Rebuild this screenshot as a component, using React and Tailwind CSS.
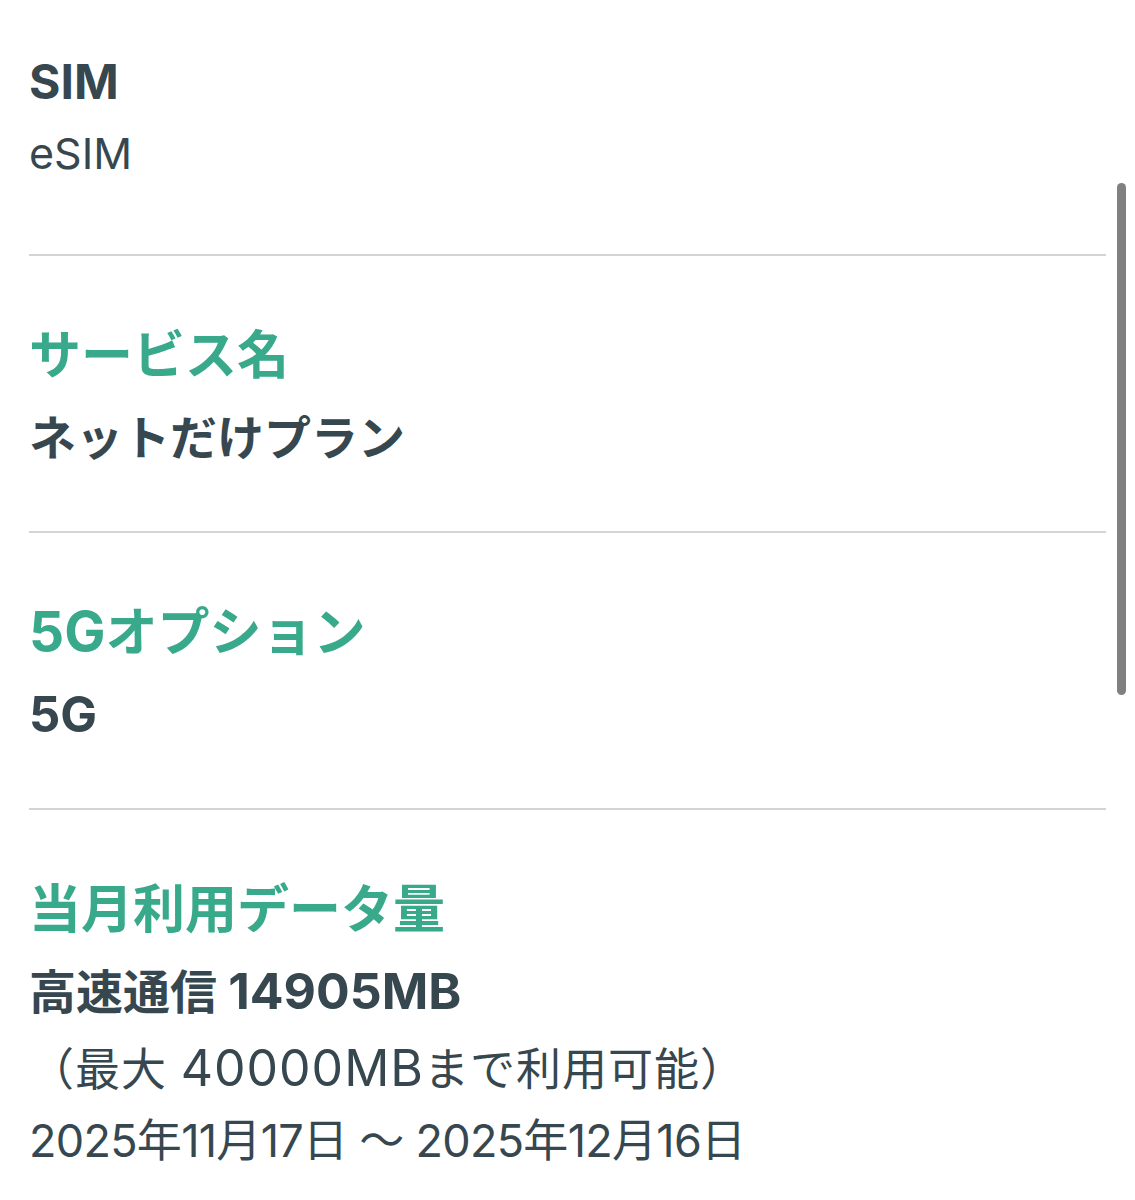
const font = { fontFamily: 'Inter, "Noto Sans CJK JP", sans-serif' };

const Section = ({ title, children, last }) => (
  <div className={`pt-[60px] pb-[51px] ${last ? '' : 'border-b-2 border-[#d4d4d4]'}`}>
    <div className="text-[52px] leading-[80px] font-bold text-[#38a98b]">{title}</div>
    {children}
  </div>
);

export default function App() {
  return (
    <div className="relative w-[1135px] h-[1200px] overflow-hidden bg-white text-[#37474f]" style={font}>
      <div className="pl-[29px] pr-[29px]">
        <div className="pt-[52px] pb-[60px] border-b-2 border-[#d4d4d4]">
          <div className="text-[48px] leading-[60px] font-bold">SIM</div>
          <div className="text-[43px] leading-[82px]">eSIM</div>
        </div>

        <Section title="サービス名">
          <div className="text-[47px] leading-[84px] font-bold">ネットだけプラン</div>
        </Section>

        <Section title={<><span className="text-[55px] leading-[40px]">5G</span>オプション</>}>
          <div className="text-[49px] leading-[84px] font-bold">5G</div>
        </Section>

        <Section title="当月利用データ量" last>
          <div className="text-[47px] leading-[84px] font-bold">
            高速通信 <span className="text-[50px] leading-[40px]">14905MB</span>
          </div>
          <div className="text-[45px] leading-[71px] tracking-[1px]">
            （最大 <span className="text-[50px] leading-[40px]">40000MB</span>まで利用可能）
          </div>
          <div className="text-[45px] leading-[71px] tracking-[-0.7px]">2025年11月17日 〜 2025年12月16日</div>
        </Section>
      </div>

      {/* overlay scrollbar */}
      <div className="absolute left-[1117px] top-[183px] w-[9px] h-[512px] rounded-full bg-[#808080]" />
    </div>
  );
}
